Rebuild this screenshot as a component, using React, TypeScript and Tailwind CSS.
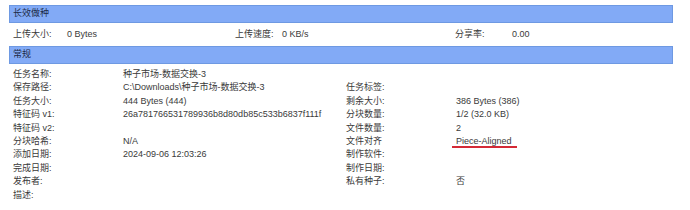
import React from "react";

const font = { fontFamily: '"Liberation Sans", "Noto Sans CJK SC", sans-serif' };

function Header({ title }: { title: string }) {
  return (
    <div className="h-[18px] bg-[#82aaf6] border border-[#6e99e2] flex items-center pl-[3px] text-[9px] text-[#1c2b48]">
      {title}
    </div>
  );
}

const rows: [string, React.ReactNode, string, React.ReactNode][] = [
  ["任务名称:", "种子市场-数据交换-3", "", ""],
  ["保存路径:", "C:\\Downloads\\种子市场-数据交换-3", "任务标签:", ""],
  ["任务大小:", "444 Bytes (444)", "剩余大小:", "386 Bytes (386)"],
  ["特征码 v1:", "26a781766531789936b8d80db85c533b6837f111f", "分块数量:", "1/2 (32.0 KB)"],
  ["特征码 v2:", "", "文件数量:", "2"],
  [
    "分块哈希:",
    "N/A",
    "文件对齐",
    <span className="relative inline-block">
      Piece-Aligned
      <span className="absolute left-[-4px] top-[11px] w-[65px] h-[2px] bg-[#d42a36]" />
    </span>,
  ],
  ["添加日期:", "2024-09-06 12:03:26", "制作软件:", ""],
  ["完成日期:", "", "制作日期:", ""],
  ["发布者:", "", "私有种子:", "否"],
  ["描述:", "", "", ""],
];

export default function App() {
  return (
    <div className="w-[690px] h-[210px] bg-white overflow-hidden" style={font}>
      <div className="ml-[9px] w-[664px] pt-[5px] text-[#3a3a3a]">
        <Header title="长效做种" />
        <div className="h-[23px] grid grid-cols-[54px_168px_47px_173px_57px_1fr] items-center pl-[4px] text-[9px]">
          <span>上传大小:</span>
          <span>0 Bytes</span>
          <span>上传速度:</span>
          <span>0 KB/s</span>
          <span>分享率:</span>
          <span>0.00</span>
        </div>
        <Header title="常规" />
        <div className="pt-[4px] pl-[4px] grid grid-cols-[110px_223px_110px_1fr] text-[9px] leading-[13.4px]">
          {rows.map((r, i) => (
            <React.Fragment key={i}>
              <span>{r[0]}</span>
              <span className="whitespace-nowrap">{r[1]}</span>
              <span>{r[2]}</span>
              <span>{r[3]}</span>
            </React.Fragment>
          ))}
        </div>
      </div>
    </div>
  );
}
